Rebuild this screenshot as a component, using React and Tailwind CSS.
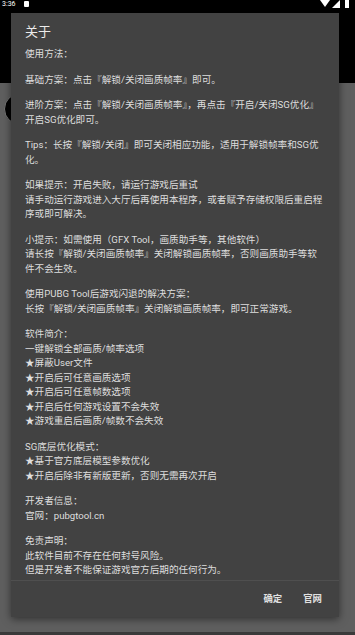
import React from 'react';

const PARAGRAPHS = [
  ['使用方法：'],
  ['基础方案：点击『解锁/关闭画质帧率』即可。'],
  ['进阶方案：点击『解锁/关闭画质帧率』，再点击『开启/关闭SG优化』', '开启SG优化即可。'],
  ['Tips：长按『解锁/关闭』即可关闭相应功能，适用于解锁帧率和SG优', '化。'],
  [
    '如果提示：开启失败，请运行游戏后重试',
    '请手动运行游戏进入大厅后再使用本程序，或者赋予存储权限后重启程',
    '序或即可解决。',
  ],
  [
    '小提示：如需使用（GFX Tool，画质助手等，其他软件）',
    '请长按『解锁/关闭画质帧率』关闭解锁画质帧率，否则画质助手等软',
    '件不会生效。',
  ],
  ['使用PUBG Tool后游戏闪退的解决方案：', '长按『解锁/关闭画质帧率』关闭解锁画质帧率，即可正常游戏。'],
  [
    '软件简介：',
    '一键解锁全部画质/帧率选项',
    '★屏蔽User文件',
    '★开启后可任意画质选项',
    '★开启后可任意帧数选项',
    '★开启后任何游戏设置不会失效',
    '★游戏重启后画质/帧数不会失效',
  ],
  ['SG底层优化模式：', '★基于官方底层模型参数优化', '★开启后除非有新版更新，否则无需再次开启'],
  ['开发者信息：', '官网：pubgtool.cn'],
  ['免责声明：', '此软件目前不存在任何封号风险。', '但是开发者不能保证游戏官方后期的任何行为。'],
];

const FONT = "font-['Roboto','Noto_Sans_CJK_SC',sans-serif]";

export default function App() {
  return (
    <div className={`relative w-[355px] h-[635px] overflow-hidden bg-[#5f5f5f] ${FONT}`}>
      {/* backdrop: dimmed app behind the dialog */}
      <div className="flex flex-col h-full">
        <div className="h-[83px] bg-black">
          <div className="flex items-start justify-between px-[2px] h-[12px] text-white">
            <div className="flex items-center gap-[8px]">
              <span className="text-[7px] leading-[8px]">3:36</span>
              <span className="w-[5px] h-[6px] bg-white rounded-[1px]" />
            </div>
            <div className="flex items-center gap-[2px] pr-[4px]">
              <svg width="10" height="8" viewBox="0 0 10 8">
                <path d="M0 0 H10 L5 7 Z" fill="#fff" />
              </svg>
              <svg width="8" height="8" viewBox="0 0 8 8">
                <path d="M8 0 V8 H0 Z" fill="#fff" />
              </svg>
              <span className="w-[4px] h-[8px] bg-white ml-[3px]" />
            </div>
          </div>
        </div>
        <div className="flex-1 relative">
          <div className="absolute left-[4px] top-[10px] w-[32px] h-[32px] rounded-full bg-black border border-[#777]" />
        </div>
        <div className="h-[3px] bg-[#3a3a3a]" />
      </div>

      {/* dialog */}
      <div className="absolute left-[11px] top-[13px] w-[328px] h-[604px] bg-[#424242] shadow-[0_2px_8px_rgba(0,0,0,0.5)] flex flex-col">
        <div className="px-[14px] pt-[10px]">
          <div className="text-[13px] leading-[18px] text-[#ececec]">关于</div>
          <div className="mt-[6px] flex flex-col gap-[11px] text-[9.6px] leading-[14.5px] text-[#dedede]">
            {PARAGRAPHS.map((lines, i) => (
              <div key={i}>
                {lines.map((line, j) => (
                  <div key={j} className="whitespace-nowrap">
                    {line}
                  </div>
                ))}
              </div>
            ))}
          </div>
        </div>
        <div className="flex-1" />
        <div className="h-px bg-[#4f4f4f]" />
        <div className="h-[36px] flex items-center justify-end gap-[21px] pr-[17px] text-[9.4px] font-semibold text-[#e0e0e0]">
          <span>确定</span>
          <span>官网</span>
        </div>
      </div>
    </div>
  );
}
